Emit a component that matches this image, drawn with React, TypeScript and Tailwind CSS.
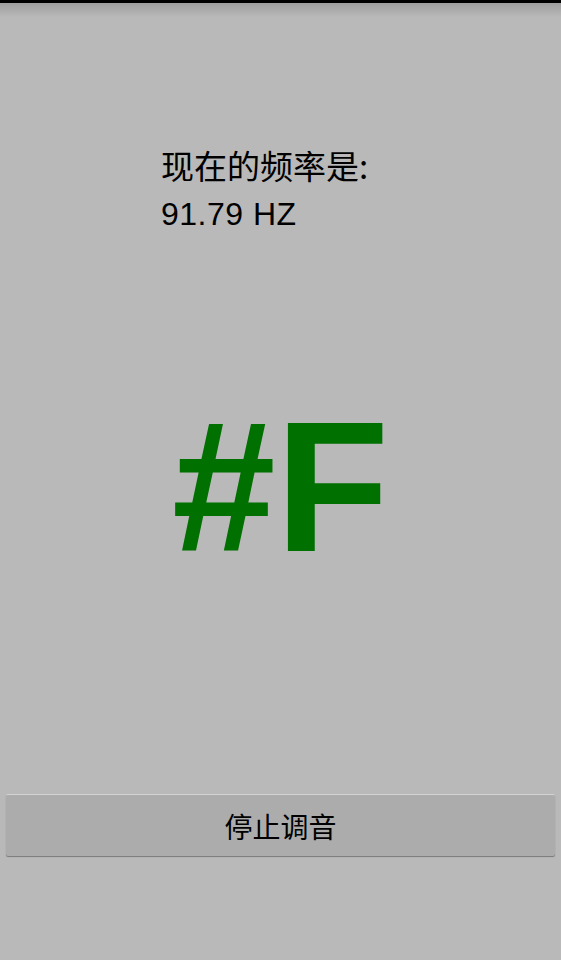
export default function App() {
  return (
    <div className="relative flex h-[960px] w-[561px] flex-col bg-[#b9b9b9] font-['Liberation_Sans','Noto_Sans_CJK_SC',sans-serif] text-black">
      <div className="h-[3px] bg-black" />
      <div className="h-[14px] bg-gradient-to-b from-[#9e9e9e] to-[#b9b9b9]" />
      <div className="pl-[161px] pt-[124px] leading-[49px]">
        <p className="font-['Noto_Sans_CJK_SC',sans-serif] text-[33px]">现在的频率是:</p>
        <p className="text-[32px] tracking-[0.5px]">91.79 HZ</p>
      </div>
      <div className="mt-[155px] text-center text-[186px] font-bold leading-none text-[#007000]">
        #F
      </div>
      <div className="mt-auto mb-[104px] px-[6px]">
        <button className="flex h-[62px] w-full items-center justify-center rounded-[2px] border-t border-t-[#d4d4d4] bg-[#acacac] font-['Noto_Sans_CJK_SC',sans-serif] text-[28px] text-black shadow-[0_1px_1px_#7a7a7a]">
          停止调音
        </button>
      </div>
    </div>
  );
}
